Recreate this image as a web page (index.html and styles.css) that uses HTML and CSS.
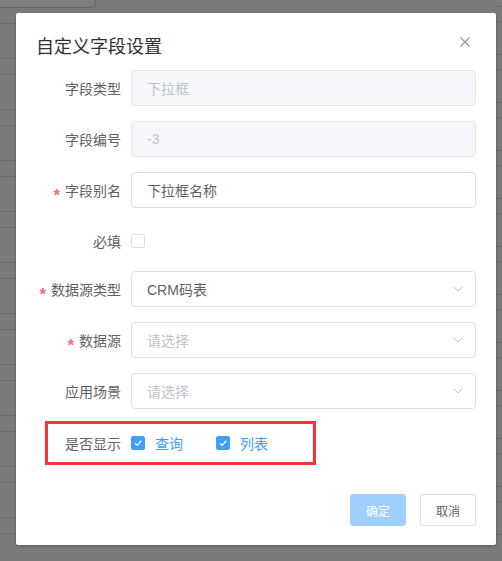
FILE: index.html
```html
<!DOCTYPE html>
<html lang="zh-CN">
<head>
<meta charset="utf-8">
<title>自定义字段设置</title>
<link rel="stylesheet" href="styles.css">
</head>
<body>
<div class="backdrop">
  <div class="peek-box"></div>
  <div class="dialog">
    <div class="dialog-header">
      <span class="dialog-title">自定义字段设置</span>
      <button class="dialog-close" type="button" aria-label="关闭">
        <svg width="10" height="10" viewBox="0 0 10 10"><path d="M0.5 0.5 L9.5 9.5 M9.5 0.5 L0.5 9.5" stroke="#909399" stroke-width="1.1" fill="none"/></svg>
      </button>
    </div>
    <div class="dialog-body">
      <div class="form-item">
        <label class="form-label">字段类型</label>
        <div class="form-control"><div class="input is-disabled">下拉框</div></div>
      </div>
      <div class="form-item">
        <label class="form-label">字段编号</label>
        <div class="form-control"><div class="input is-disabled">-3</div></div>
      </div>
      <div class="form-item">
        <label class="form-label"><span class="req">*</span>字段别名</label>
        <div class="form-control"><div class="input">下拉框名称</div></div>
      </div>
      <div class="form-item item-short">
        <label class="form-label">必填</label>
        <div class="form-control"><span class="checkbox"></span></div>
      </div>
      <div class="form-item">
        <label class="form-label"><span class="req">*</span>数据源类型</label>
        <div class="form-control">
          <div class="input select"><span>CRM码表</span>
            <svg class="arrow" width="10" height="6" viewBox="0 0 10 6"><polyline points="0.5,0.5 5,5 9.5,0.5" fill="none" stroke="#c0c4cc" stroke-width="1"/></svg>
          </div>
        </div>
      </div>
      <div class="form-item">
        <label class="form-label"><span class="req">*</span>数据源</label>
        <div class="form-control">
          <div class="input select"><span class="placeholder">请选择</span>
            <svg class="arrow" width="10" height="6" viewBox="0 0 10 6"><polyline points="0.5,0.5 5,5 9.5,0.5" fill="none" stroke="#c0c4cc" stroke-width="1"/></svg>
          </div>
        </div>
      </div>
      <div class="form-item">
        <label class="form-label">应用场景</label>
        <div class="form-control">
          <div class="input select"><span class="placeholder">请选择</span>
            <svg class="arrow" width="10" height="6" viewBox="0 0 10 6"><polyline points="0.5,0.5 5,5 9.5,0.5" fill="none" stroke="#c0c4cc" stroke-width="1"/></svg>
          </div>
        </div>
      </div>
      <div class="form-item item-display">
        <span class="highlight"></span>
        <label class="form-label">是否显示</label>
        <div class="form-control checks">
          <span class="check-item">
            <span class="checkbox is-checked"><svg width="14" height="14" viewBox="0 0 14 14"><polyline points="4,7.2 6.2,9.4 10.2,4.8" fill="none" stroke="#fff" stroke-width="1.3"/></svg></span>
            <span class="check-label">查询</span>
          </span>
          <span class="check-item">
            <span class="checkbox is-checked"><svg width="14" height="14" viewBox="0 0 14 14"><polyline points="4,7.2 6.2,9.4 10.2,4.8" fill="none" stroke="#fff" stroke-width="1.3"/></svg></span>
            <span class="check-label">列表</span>
          </span>
        </div>
      </div>
    </div>
    <div class="dialog-footer">
      <button class="btn btn-primary is-disabled" type="button">确定</button>
      <button class="btn" type="button">取消</button>
    </div>
  </div>
</div>
</body>
</html>
```
FILE: styles.css
```css
* { box-sizing: border-box; }
html, body { margin: 0; padding: 0; }
body {
  width: 502px;
  height: 561px;
  overflow: hidden;
  font-family: "Liberation Sans", "Noto Sans CJK SC", sans-serif;
}
.backdrop {
  width: 502px;
  height: 561px;
  background-color: #7b7b7b;
  background-image:
    repeating-linear-gradient(to bottom, transparent 0 7px, #6c6c6c 7px 8px, transparent 8px 23px, #6c6c6c 23px 24px, transparent 24px 51px),
    repeating-linear-gradient(to bottom, transparent 0 6px, #6c6c6c 6px 7px, transparent 7px 21px, #6c6c6c 21px 22px, transparent 22px 48px);
  background-size: 16px 545px, 6px 545px;
  background-position: left top, right top;
  background-repeat: no-repeat;
  overflow: hidden;
}
.peek-box {
  width: 96px;
  height: 8px;
  border-right: 1px solid #6a6a6a;
  border-bottom: 1px solid #6a6a6a;
  border-bottom-right-radius: 4px;
  background: #7e7e7e;
}
.dialog {
  width: 480px;
  height: 532px;
  margin: 5px 0 0 16px;
  background: #fff;
  border-radius: 2px;
  box-shadow: 0 1px 3px rgba(0, 0, 0, 0.3);
}
.dialog-header {
  display: flex;
  justify-content: space-between;
  align-items: flex-start;
  padding: 20px 20px 10px;
  line-height: 24px;
}
.dialog-title {
  font-size: 18px;
  color: #303133;
  font-family: "Noto Sans CJK SC", sans-serif;
}
.dialog-close {
  width: 16px;
  height: 18px;
  padding: 0;
  border: 0;
  background: none;
  display: flex;
  align-items: center;
  justify-content: flex-start;
}
.dialog-close svg { display: block; }
.dialog-body {
  padding: 3px 20px 0;
}
.form-item {
  display: flex;
  align-items: center;
  height: 36px;
  margin-bottom: 15px;
}
.item-short { margin-bottom: 12px; }
.item-display {
  position: relative;
  height: 38px;
  margin-bottom: 0;
}
.form-label {
  width: 95px;
  flex: none;
  padding-right: 10px;
  text-align: right;
  font-size: 14px;
  color: #606266;
  font-family: "Noto Sans CJK SC", sans-serif;
  line-height: 20px;
}
.req {
  color: #f56c6c;
  margin-right: 5px;
  font-family: "Liberation Sans", sans-serif;
  font-size: 17px;
  font-weight: bold;
  line-height: 10px;
  vertical-align: -5px;
}
.form-control {
  flex: 1;
  display: flex;
  align-items: center;
}
.input {
  width: 100%;
  height: 36px;
  border: 1px solid #dcdfe6;
  border-radius: 4px;
  padding: 0 15px;
  display: flex;
  align-items: center;
  font-size: 14px;
  color: #606266;
  background: #fff;
}
.input.is-disabled {
  background: #f5f7fa;
  border-color: #e4e7ed;
  color: #c0c4cc;
}
.select {
  justify-content: space-between;
  padding-right: 12px;
}
.arrow { display: block; }
.placeholder { color: #c0c4cc; }
.checkbox {
  width: 14px;
  height: 14px;
  border: 1px solid #dcdfe6;
  border-radius: 2px;
  background: #fff;
  display: inline-flex;
  align-items: center;
  justify-content: center;
  flex: none;
}
.checkbox.is-checked {
  background: #409eff;
  border-color: #409eff;
}
.checkbox svg { display: block; margin: -1px; }
.checks { gap: 33px; }
.check-item {
  display: inline-flex;
  align-items: center;
}
.check-label {
  padding-left: 10px;
  font-size: 14px;
  color: #409eff;
  font-family: "Noto Sans CJK SC", sans-serif;
  line-height: 20px;
}
.highlight {
  position: absolute;
  left: 9px;
  top: -3px;
  width: 271px;
  height: 44px;
  border: 3px solid #f73434;
  pointer-events: none;
}
.dialog-footer {
  display: flex;
  justify-content: flex-end;
  gap: 14px;
  padding: 32px 20px 19px;
}
.btn {
  height: 32px;
  width: 56px;
  padding: 0;
  border: 1px solid #dcdfe6;
  border-radius: 3px;
  background: #fff;
  color: #606266;
  font-size: 12px;
  font-family: "Noto Sans CJK SC", sans-serif;
}
.btn-primary.is-disabled {
  background: #a0cfff;
  border-color: #a0cfff;
  color: #fff;
}
```
